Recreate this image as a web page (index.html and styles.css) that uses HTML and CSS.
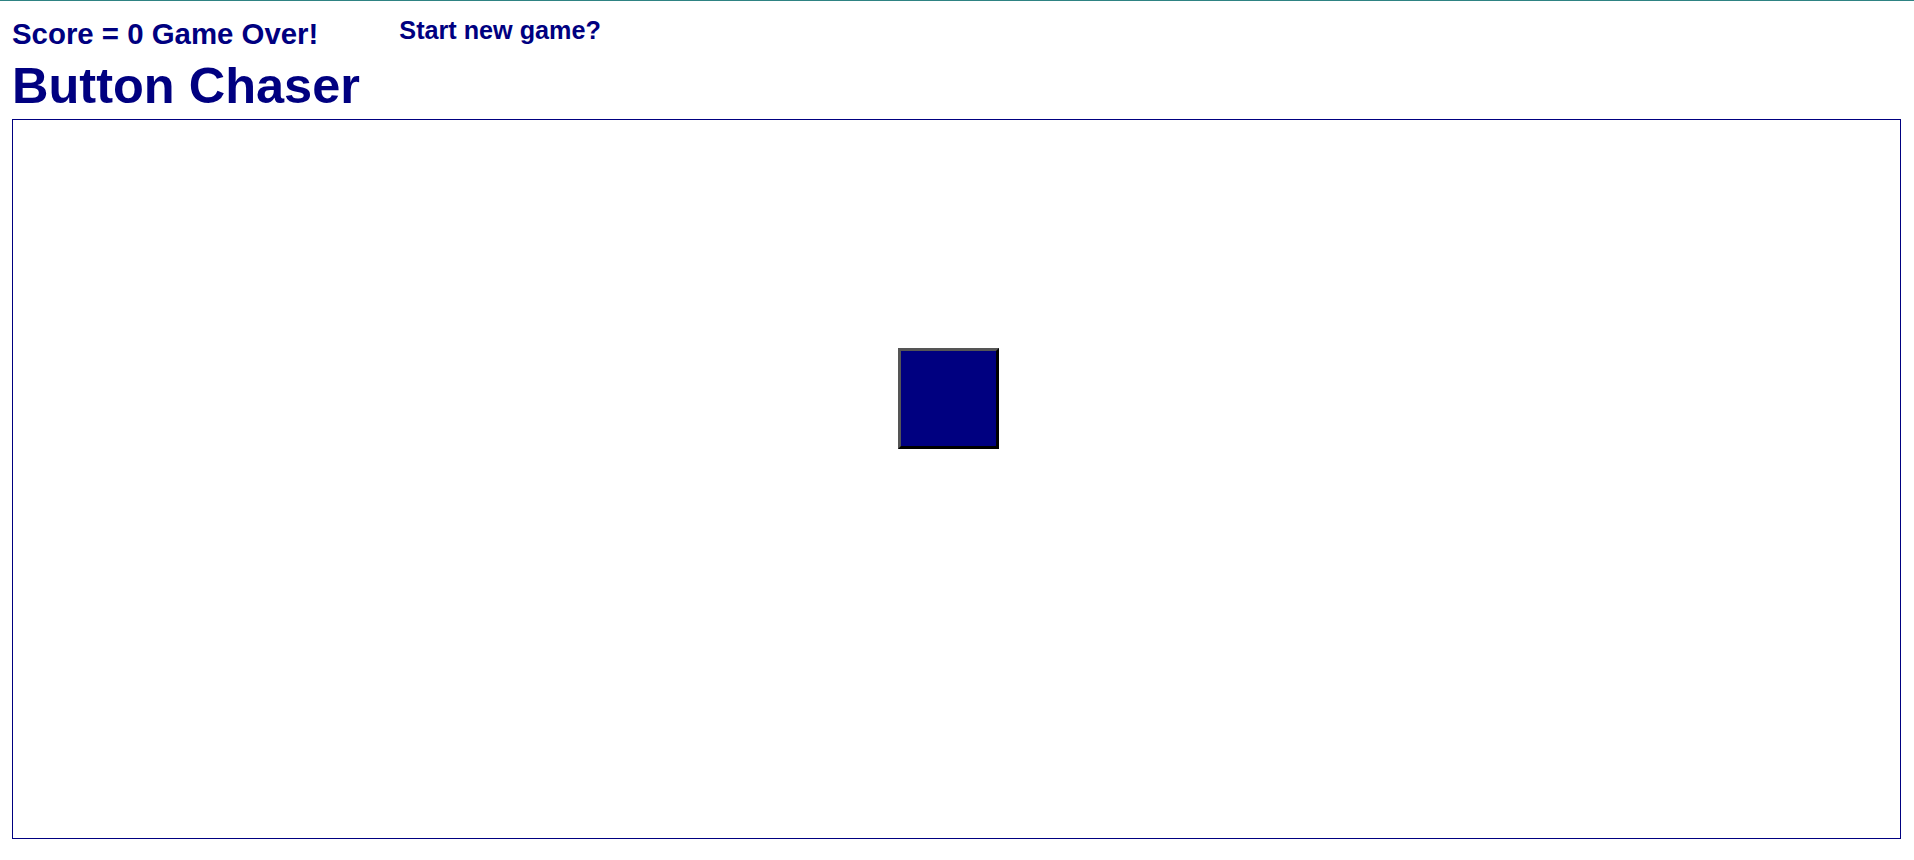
FILE: index.html
```html
<!DOCTYPE html>
<html>
<head>
<meta charset="utf-8">
<title>Button Chaser</title>
<link rel="stylesheet" href="styles.css">
</head>
<body>
<div class="status-row">
  <div class="score">Score = 0 Game Over!</div>
  <div class="restart">Start new game?</div>
</div>
<h1 class="title">Button Chaser</h1>
<div class="arena">
  <button class="target" style="left:885px;top:228px" aria-label="target"></button>
</div>
</body>
</html>
```
FILE: styles.css
```css
html, body {
  margin: 0;
  padding: 0;
  background: #ffffff;
}
body {
  border-top: 1px solid #2e8383;
  padding: 0 13px 0 12px;
  font-family: "Liberation Sans", Arial, sans-serif;
  color: #000080;
}
.status-row {
  display: flex;
  align-items: flex-start;
  padding-top: 16px;
}
.score {
  font-size: 29.4px;
  font-weight: bold;
  line-height: 34px;
}
.restart {
  font-size: 25.2px;
  font-weight: bold;
  line-height: 26px;
  margin-left: 81px;
  cursor: pointer;
}
.title {
  margin: 7px 0 5px 0;
  font-size: 50.5px;
  font-weight: bold;
  line-height: 56px;
}
.arena {
  position: relative;
  box-sizing: border-box;
  width: 1889px;
  height: 720px;
  border: 1px solid #000080;
}
.target {
  position: absolute;
  box-sizing: border-box;
  width: 101px;
  height: 101px;
  padding: 0;
  background: #000080;
  border-style: solid;
  border-width: 3px;
  border-color: #555555 #000000 #000000 #555555;
}
```
